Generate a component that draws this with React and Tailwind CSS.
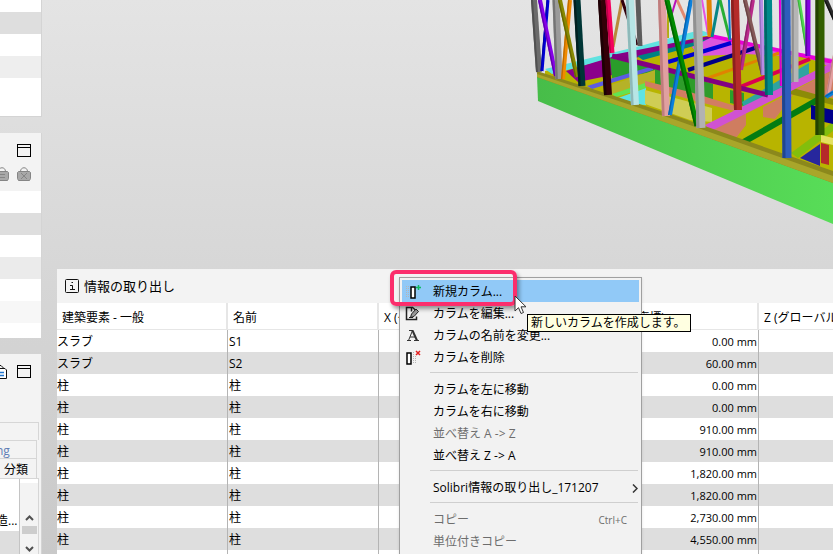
import React from 'react';

const rows = [
  { element: 'スラブ', name: 'S1', y: '0.00 mm' },
  { element: 'スラブ', name: 'S2', y: '60.00 mm' },
  { element: '柱', name: '柱', y: '0.00 mm' },
  { element: '柱', name: '柱', y: '0.00 mm' },
  { element: '柱', name: '柱', y: '910.00 mm' },
  { element: '柱', name: '柱', y: '910.00 mm' },
  { element: '柱', name: '柱', y: '1,820.00 mm' },
  { element: '柱', name: '柱', y: '1,820.00 mm' },
  { element: '柱', name: '柱', y: '2,730.00 mm' },
  { element: '柱', name: '柱', y: '4,550.00 mm' },
  { element: '', name: '', y: '' },
];

// points, fill
const floors = [
  ['545,71 690,35 712,36 833,60 833,176 545,76', '#b8b400'],
  ['545,69 640,46 700,30 712,34 640,51 552,74', '#60e2e0'],
  ['566,71 612,57 612,75 578,82', '#8b008b'],
  ['612,55 714,35 714,41 625,60', '#860086'],
  ['637,56 712,38 712,41 643,60', '#008282'],
  ['692,47 712,37 833,59 833,68 806,57 745,54 700,56', '#dc55dc'],
  ['711,34 833,60 833,64 711,38', '#e800d8'],
  ['610,58 655,68 655,72 612,78', '#2a9d2a'],
  ['655,66 713,84 713,100 655,84', '#2f9c2b'],
  ['730,90 744,93 744,106 730,103', '#2aa02a'],
  ['742,102 809,63 809,76 770,94 744,107', '#2fa3a0'],
  ['587,86 653,66 653,70 592,89', '#5c5ce2'],
  ['602,88 655,70 655,80 612,94', '#b5b228'],
  ['612,94 645,83 646,88 616,97', '#62e352'],
  ['618,98 646,88 646,105 630,104', '#5fe3e3'],
  ['645,90 712,108 712,122 690,120 645,104', '#cfcd55'],
  ['645,81 690,92 742,108 738,112 688,99 645,86', '#d27c62'],
  ['709,129 746,112 746,125 736,138', '#cf7d60'],
  ['763,107 833,70 833,98 795,92 775,119 763,117', '#cf7d60'],
  ['793,88 833,99 833,105 790,94', '#8c8b08'],
  ['705,125 833,62 833,70 711,131', '#d052d2'],
  ['741,140 820,95 820,102 748,143', '#047c12'],
  ['791,153 833,122 833,131 798,158', '#83be0c'],
  ['811,105 833,110 833,124 811,119', '#00008b'],
  ['800,158 820,144 820,166', '#27279d'],
  ['821,143 829,145 829,165 821,163', '#b52a2a'],
  ['821,135 833,138 833,145 821,142', '#e3e060'],
];

// x1, y1, x2, y2, width, colour
const beams = [
  [668, 62, 731, 43, 4, '#0000d2'],
  [688, 70, 755, 48, 4, '#000084'],
  [705, 79, 779, 53, 3, '#e08200'],
  [740, 87, 810, 59, 4, '#dc0050'],
  [612, 56, 768, 95, 5, '#820082'],
  [622, 0, 613, 47, 3, '#b8893a'],
  [622, 0, 637, 45, 3, '#33000c'],
  [638, 0, 640, 46, 5, '#5c5c5c'],
  [677, 0, 687, 22, 3, '#e38a70'],
  [676, 0, 670, 20, 2, '#b812b8'],
  [668, 8, 668, 38, 2, '#b0ad10'],
  [702, 0, 708, 34, 2, '#e552e5'],
  [709, 0, 710, 37, 5, '#e08200'],
  [719, 0, 712, 37, 3, '#078686'],
  [720, 0, 730, 40, 3, '#28ae35'],
  [729, 0, 730, 40, 2, '#0f74cf'],
];

// x1, y1, x2, y2, width, lit side, shaded side
const columns = [
  [534, 0, 539, 72, 6, '#6b6b6b', '#505050'],
  [548, 0, 542, 71, 3, '#0000d6', '#0000a8'],
  [540, 0, 556, 76, 4, '#8500e8', '#6200ae'],
  [556, 0, 559, 79, 7, '#9a9a9a', '#747474'],
  [570, 0, 563, 79, 4, '#f08a00', '#c06c00'],
  [560, 0, 577, 77, 4, '#878700', '#666600'],
  [577, 0, 582, 86, 7, '#003636', '#002020'],
  [602, 0, 608, 95, 8, '#330008', '#1d0004'],
  [608, 0, 612, 53, 5, '#f5005e', '#bf0049'],
  [630, 0, 635, 105, 8, '#b7e5e5', '#8eb9b9'],
  [662, 0, 666, 116, 8, '#e0a0a0', '#bf7d7d'],
  [691, 0, 670, 115, 4, '#0a80dc', '#0862aa'],
  [667, 0, 697, 126, 5, '#008a00', '#006500'],
  [697, 0, 701, 128, 9, '#b2b2b2', '#919191'],
  [753, 0, 741, 70, 4, '#b82a8a', '#8e206b'],
  [735, 0, 738, 110, 8, '#b52b2b', '#8c1f1f'],
  [745, 0, 763, 75, 4, '#845858', '#694343'],
  [761, 0, 763, 75, 4, '#b78de5', '#9470c0'],
  [768, 0, 769, 95, 8, '#008a8a', '#006767'],
  [780, 0, 781, 86, 2, '#ed00e0', '#b800ae'],
  [795, 0, 795, 82, 7, '#b5b5b5', '#8f8f8f'],
  [799, 0, 808, 56, 3, '#50d850', '#3cab3c'],
  [808, 0, 808, 56, 5, '#8600e2', '#6200a8'],
  [835, 55, 828, 95, 4, '#e3a0a0', '#c08080'],
  [826, 97, 834, 92, 4, '#0a80dc', '#0862aa'],
  [786, 0, 787, 158, 9, '#2e5dbb', '#20458f'],
  [820, 0, 820, 135, 9, '#335f00', '#224200'],
  [826, 0, 835, 20, 4, '#2c2c2c', '#141414'],
];

const ModelView = () => (
  <svg viewBox="530 0 303 230" className="h-[230px] w-[303px]" aria-hidden="true">
    <defs>
      <linearGradient id="slab" x1="0" x2="1">
        <stop offset="0" stopColor="#47bd49" />
        <stop offset="1" stopColor="#58dd58" />
      </linearGradient>
    </defs>
    {floors.map(([points, fill]) => (
      <polygon key={points} points={points} fill={fill} />
    ))}
    {beams.map(([x1, y1, x2, y2, w, stroke], i) => (
      <line key={i} x1={x1} y1={y1} x2={x2} y2={y2} stroke={stroke} strokeWidth={w} />
    ))}
    <polygon points="537,76 833,182 833,224 538,101" fill="url(#slab)" />
    <polygon points="537,71 673,115 833,171 833,183 673,125 537,77" fill="#8b881c" />
    <polygon points="673,119 833,176 833,183 673,125 537,77 537,74" fill="#a9a62a" />
    {columns.map(([x1, y1, x2, y2, w, light, dark], i) => (
      <g key={i}>
        <line x1={x1} y1={y1} x2={x2} y2={y2} stroke={light} strokeWidth={w} />
        <line
          x1={x1 - w / 3}
          y1={y1}
          x2={x2 - w / 3}
          y2={y2}
          stroke={dark}
          strokeWidth={w / 3}
        />
      </g>
    ))}
  </svg>
);

const MaximizeButton = () => (
  <button type="button" aria-label="最大化" className="shrink-0">
    <svg width="14" height="13" fill="none" stroke="#000" shapeRendering="crispEdges">
      <rect x="0.5" y="0.5" width="13" height="12" />
      <path d="M0 3.5h14" />
    </svg>
  </button>
);

const Basket = ({ crossed }) => (
  <svg width="14" height="15" fill="none" stroke="#858585">
    <path d="M3.5 4.5c0-5 7-5 7 0" />
    <path d="M1.5 4.5h11l1 1v6l-1 2h-11l-1-2v-6z" fill="#a8a8a8" />
    <path d={crossed ? 'M4 6l6 6M10 6l-6 6' : 'M4 7.5h6M4 10.5h6'} />
  </svg>
);

const Stripes = ({ className }) => <div className={`h-[22px] shrink-0 ${className}`} />;

const SidePanels = () => (
  <aside className="flex h-full w-[42px] shrink-0 flex-col gap-4 overflow-hidden">
    <section className="h-[117px] shrink-0 overflow-hidden border-r border-b border-[#d4d4d4] bg-white">
      <div className="h-3" />
      <Stripes className="bg-[#dedede]" />
      <Stripes className="bg-white" />
      <Stripes className="bg-[#eeeeee]" />
    </section>

    <section className="flex h-[205px] shrink-0 flex-col overflow-hidden border-r border-[#d4d4d4] bg-white">
      <header className="flex h-[58px] shrink-0 flex-col items-end gap-[10px] bg-[#f3f3f3] pt-[11px] pr-[10px]">
        <MaximizeButton />
        <div className="flex justify-end gap-2">
          <button type="button" aria-label="バスケットに設定">
            <Basket />
          </button>
          <button type="button" aria-label="バスケットを空にする">
            <Basket crossed />
          </button>
        </div>
      </header>
      <Stripes className="bg-white" />
      <Stripes className="bg-[#dedede]" />
      <Stripes className="bg-white" />
      <Stripes className="bg-[#ebebeb]" />
      <Stripes className="bg-white" />
      <Stripes className="bg-[#f7f7f7]" />
    </section>

    <section className="flex min-h-0 flex-1 flex-col overflow-hidden border-r border-[#d4d4d4] bg-[#f3f3f3]">
      <header className="flex h-[68px] shrink-0 items-start justify-end gap-[10px] pt-[11px] pr-[10px]">
        <button type="button" aria-label="レポート">
          <svg width="14" height="14" fill="none" stroke="#111">
            <path d="M1 3.5h11l1.5 1.5v8.5H1z" fill="#fff" />
            <path d="M4 3.5l2-3h2l3 3" />
            <path d="M3 7.5h8M3 10.5h8" stroke="#2277d0" strokeWidth="1.5" />
          </svg>
        </button>
        <MaximizeButton />
      </header>
      <div className="mr-[2px] h-[18px] shrink-0 border-t border-r border-[#d6d6d6]" />
      <div className="mr-1 h-[18px] shrink-0 border-t border-r border-[#d6d6d6] pt-[3px] leading-[14px] text-[#5f7db5]">
        <span className="-ml-1">ng</span>
      </div>
      <button
        type="button"
        className="mr-1 h-5 shrink-0 border-t border-r border-[#d6d6d6] pt-px pr-2 text-right leading-5"
      >
        分類
      </button>
      <div className="mr-[2px] flex min-h-0 flex-1 border-t border-r border-[#d6d6d6]">
        <div className="flex w-5 shrink-0 flex-col overflow-hidden border-r border-[#c4c4c4] bg-white pt-[30px]">
          <span className="-ml-1 h-[22px] shrink-0 pt-px leading-[22px] whitespace-nowrap">
            造...
          </span>
          <div className="flex-1 bg-[#dedede]" />
        </div>
        <div className="flex flex-1 flex-col items-center border-t-4 border-white pt-8">
          <svg width="9" height="6" fill="none" stroke="#505050" strokeWidth="2">
            <path d="M1 5l3.5-3.5L8 5" />
          </svg>
          <div className="mt-[5px] mb-3 h-2 w-[15px] bg-[#cdcdcd]" />
          <svg width="9" height="6" fill="none" stroke="#505050" strokeWidth="2">
            <path d="M1 1l3.5 3.5L8 1" />
          </svg>
        </div>
      </div>
    </section>
  </aside>
);

const NewColumnIcon = () => (
  <svg width="17" height="16" fill="none">
    <path d="M1.5 2v12M3.5 2v12" stroke="#b5b5b5" strokeDasharray="1 1" />
    <rect x="6" y="3" width="4" height="11" stroke="#000" strokeWidth="1.5" fill="#fff" />
    <path d="M11 3.5h5M13.5 1v5" stroke="#10b860" strokeWidth="1.5" />
  </svg>
);

const EditColumnIcon = () => (
  <svg width="17" height="16" fill="none" stroke="#222">
    <path d="M7 1.500H1.5v12h10v-3M6.500 1v4.500" strokeWidth="1.5" />
    <path d="M7 1l4.500 4" strokeWidth="1.5" />
    <path d="M5.500 11.500l1-3.500 4.500-5 2.500 2.500-4.500 5z" fill="#999" />
    <path d="M4 11.5h4" />
  </svg>
);

const RenameIcon = () => (
  <svg width="17" height="16" fill="none" stroke="#333">
    <path d="M3.5 12.5L7.5 2.5M4 2.5h4" />
    <path d="M7.5 2.5l4.5 10" strokeWidth="2" />
    <path d="M5 9h6M2 12.500h4M9 12.500h5" />
  </svg>
);

const DeleteColumnIcon = () => (
  <svg width="17" height="16" fill="none">
    <rect x="2" y="3" width="4" height="11" stroke="#000" strokeWidth="1.5" fill="#fff" />
    <path d="M8.5 2v12M10.5 6v8" stroke="#b5b5b5" strokeDasharray="1 1" />
    <path d="M11 1l4 4M15 1l-4 4" stroke="#e32020" strokeWidth="1.5" />
  </svg>
);

const MenuItem = ({ icon, label, shortcut, submenu, active, disabled }) => (
  <button
    type="button"
    role="menuitem"
    disabled={disabled}
    className={`flex h-[22px] w-full items-center pt-[2px] text-left whitespace-nowrap ${
      active ? 'bg-[#91c9f7]' : ''
    } ${disabled ? 'text-[#6d6d6d]' : 'text-black'}`}
  >
    <span className="flex w-[31px] shrink-0 pl-[3px]">{icon}</span>
    <span className="flex-1">{label}</span>
    {shortcut && <span className="pr-3 text-[10px]">{shortcut}</span>}
    {submenu && (
      <svg width="6" height="9" className="mr-px" fill="none" stroke="#333" strokeWidth="1.5">
        <path d="M1 .5l4 4-4 4" />
      </svg>
    )}
  </button>
);

const Separator = () => <div className="mt-1 mb-[5px] mr-px ml-7 border-t border-[#cfcfcf]" />;

const ContextMenu = () => (
  <div
    role="menu"
    className="absolute top-2 left-[342px] w-[243px] border border-[#a0a0a0] bg-[#f2f2f2] p-[2px] shadow-sm"
  >
    <MenuItem icon={<NewColumnIcon />} label="新規カラム..." active />
    <MenuItem icon={<EditColumnIcon />} label="カラムを編集..." />
    <MenuItem icon={<RenameIcon />} label="カラムの名前を変更..." />
    <MenuItem icon={<DeleteColumnIcon />} label="カラムを削除" />
    <Separator />
    <MenuItem label="カラムを左に移動" />
    <MenuItem label="カラムを右に移動" />
    <MenuItem label="並べ替え A -> Z" disabled />
    <MenuItem label="並べ替え Z -> A" />
    <Separator />
    <MenuItem label="Solibri情報の取り出し_171207" submenu />
    <Separator />
    <MenuItem label="コピー" shortcut="Ctrl+C" disabled />
    <MenuItem label="単位付きコピー" disabled />
  </div>
);

const TakeoffTable = () => (
  <table className="w-full table-fixed border-separate border-spacing-0 whitespace-nowrap">
    <colgroup>
      <col className="w-[171px]" />
      <col className="w-[151px]" />
      <col className="w-[180px]" />
      <col className="w-[200px]" />
      <col />
    </colgroup>
    <thead>
      <tr className="h-[27px] bg-white text-left">
        {['建築要素 - 一般', '名前', 'X (グローバル座標)', 'Y (グローバル座標)', 'Z (グローバル座標)'].map(
          (title) => (
            <th
              key={title}
              className="overflow-hidden border-r-2 border-b border-[#e6e6e6] p-0 pt-1 pl-[5px] font-normal last:border-r-0"
            >
              {title}
            </th>
          )
        )}
      </tr>
    </thead>
    <tbody>
      {rows.map((row, i) => (
        <tr key={i} className="h-[22px] bg-white even:bg-[#dedede]">
          <td className="border-r border-[#b4b4b4] p-0 pt-[2px]">{row.element}</td>
          <td className="border-r border-[#b4b4b4] p-0 pt-[2px] pl-px">{row.name}</td>
          <td className="border-r border-[#b4b4b4] p-0" />
          <td className="border-r border-[#b4b4b4] p-0 pt-[2px] pr-px text-right text-[11px]">
            {row.y}
          </td>
          <td className="p-0" />
        </tr>
      ))}
    </tbody>
  </table>
);

export default function App() {
  return (
    <div className="flex h-screen gap-[15px] overflow-hidden bg-linear-to-b from-[#e4e4e4] to-[#c9c9c9] font-['Open_Sans','Noto_Sans_CJK_JP',sans-serif] text-[12px] leading-4 text-black">
      <SidePanels />
      <main className="flex min-w-0 flex-1 flex-col">
        <div className="flex h-[269px] shrink-0 items-start justify-end overflow-hidden">
          <ModelView />
        </div>

        <section className="relative min-h-0 flex-1">
          <div className="h-full overflow-hidden bg-white">
            <header className="flex h-[34px] items-center gap-[5px] bg-[#f3f3f3] pl-2">
              <svg width="14" height="14" fill="none" stroke="#111">
                <rect x="0.5" y="0.5" width="13" height="13" rx="1" />
                <path d="M5 6.5h2.5V10.5M5 10.5h5M6.5 3.5h1.5" />
              </svg>
              <h1 className="text-[13px]">情報の取り出し</h1>
            </header>
            <TakeoffTable />
          </div>

          <div className="absolute inset-0 overflow-hidden">
            <ContextMenu />
          </div>

          <div className="absolute top-px left-[333px] h-9 w-[127px] rounded-md border-4 border-[#fb2e6c] shadow-[2px_3px_4px_rgba(0,0,0,0.4)]" />
          <div
            role="tooltip"
            className="absolute top-[45px] left-[470px] h-[18px] w-[164px] border border-black bg-[#ffffe1] pl-[3px] whitespace-nowrap"
          >
            新しいカラムを作成します。
          </div>
          <svg width="13" height="20" className="absolute top-[26px] left-[457px]">
            <path
              d="M1 1v15l3.5-3.3 2.5 5.8 2.5-1-2.5-5.7h5z"
              fill="#fff"
              stroke="#333"
            />
          </svg>
        </section>
      </main>
    </div>
  );
}
